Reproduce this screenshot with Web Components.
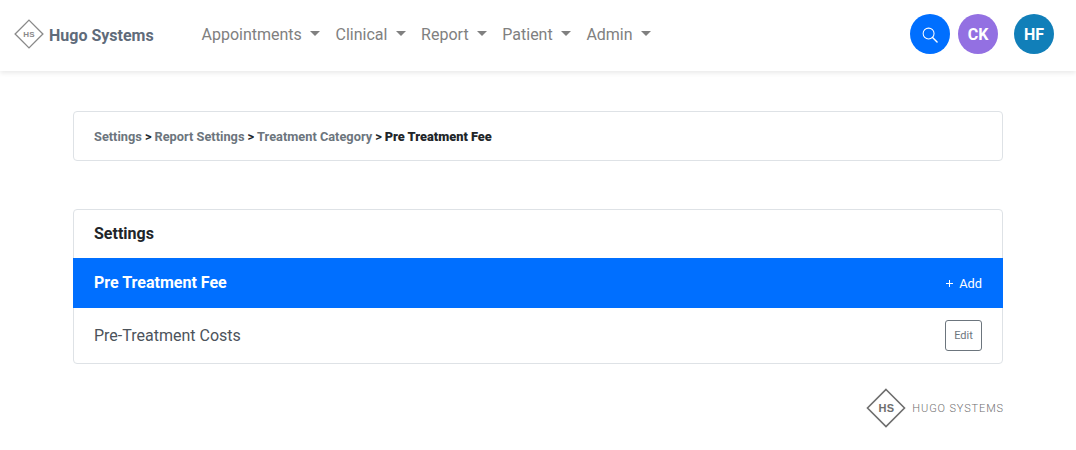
<!DOCTYPE html>
<html lang="en">
<head>
<meta charset="utf-8">
<title>Hugo Systems</title>
<style>
  html, body { margin: 0; background: #fff; }
  /* opacity keeps text on a grayscale antialiased layer, like the reference */
  body { font-family: Roboto, "Liberation Sans", sans-serif; color: #212529; height: 450px; overflow: hidden; opacity: .999; }
</style>
</head>
<body>
<hs-navbar>
  <hs-nav-item>Appointments</hs-nav-item>
  <hs-nav-item>Clinical</hs-nav-item>
  <hs-nav-item>Report</hs-nav-item>
  <hs-nav-item>Patient</hs-nav-item>
  <hs-nav-item>Admin</hs-nav-item>
</hs-navbar>
<hs-page>
  <hs-breadcrumb current="Pre Treatment Fee">
    <span>Settings</span><span>Report Settings</span><span>Treatment Category</span>
  </hs-breadcrumb>
  <hs-settings-card heading="Settings">
    <hs-section-row title="Pre Treatment Fee"></hs-section-row>
    <hs-item-row>Pre-Treatment Costs</hs-item-row>
  </hs-settings-card>
  <hs-footer-logo></hs-footer-logo>
</hs-page>

<script>
  // diamond logo, used in the navbar and in the footer
  class HsDiamond extends HTMLElement {
    constructor() {
      super();
      this.attachShadow({ mode: "open" });
    }
    connectedCallback() {
      const size = this.getAttribute("size") || "30";
      const fontSize = this.getAttribute("text-size") || "8";
      const color = this.getAttribute("color") || "#888";
      this.shadowRoot.innerHTML = `
        <style>
          :host { display: block; flex: none; position: relative; width: ${size}px; height: ${size}px; }
          svg { display: block; width: 100%; height: 100%; }
          span {
            position: absolute; inset: 0;
            display: flex; align-items: center; justify-content: center;
            font: 700 ${fontSize}px "Liberation Sans", sans-serif;
            letter-spacing: .3px;
            color: ${color};
          }
        </style>
        <svg viewBox="0 0 40 40"><path d="M20 1.5 38.5 20 20 38.5 1.5 20Z" fill="none" stroke="${color}" stroke-width="${this.getAttribute("stroke") || "2"}"/></svg>
        <span>HS</span>
      `;
    }
  }

  class HsNavbar extends HTMLElement {
    constructor() {
      super();
      this.attachShadow({ mode: "open" });
      this.shadowRoot.innerHTML = `
        <style>
          :host {
            display: flex; align-items: center;
            height: 71px; box-sizing: border-box;
            padding: 0 22px 3px 14px;
            background: #fff;
            box-shadow: 0 2px 5px rgba(0,0,0,.09);
          }
          .brand { display: flex; align-items: center; gap: 5px; width: 187.5px; flex: none; }
          .brand b { font-size: 16px; font-weight: 700; color: #5f6b7a; position: relative; top: 1px; }
          nav { display: flex; gap: 15.2px; flex: 1; padding-top: 1px; }
          .actions { display: flex; align-items: center; }
          .search {
            width: 40px; height: 40px; border-radius: 50%;
            background: #006fff;
            display: flex; align-items: center; justify-content: center;
            margin-right: 8px;
          }
          .search svg { width: 16px; height: 16px; margin-top: 2px; }
          hs-avatar + hs-avatar { margin-left: 16px; }
        </style>
        <div class="brand">
          <hs-diamond size="30" text-size="8" color="#8a8a8a" stroke="1.8"></hs-diamond>
          <b>Hugo Systems</b>
        </div>
        <nav><slot></slot></nav>
        <div class="actions">
          <div class="search">
            <svg viewBox="0 0 17 17" fill="none" stroke="#fff" stroke-width="1.1" stroke-linecap="round"><circle cx="7" cy="7" r="5.8"/><path d="M11.2 11.2 16 16" stroke-width="1.5"/></svg>
          </div>
          <hs-avatar color="#9370e2">CK</hs-avatar>
          <hs-avatar color="#117fb9">HF</hs-avatar>
        </div>
      `;
    }
  }

  class HsNavItem extends HTMLElement {
    constructor() {
      super();
      this.attachShadow({ mode: "open" });
      this.shadowRoot.innerHTML = `
        <style>
          :host {
            display: inline-flex; align-items: center;
            font-size: 16px; line-height: 24px; color: #808080;
          }
          i {
            display: block; margin-left: 8.5px; margin-top: -3px;
            border-top: 5px solid #808080;
            border-left: 5px solid transparent;
            border-right: 5px solid transparent;
          }
        </style>
        <slot></slot><i></i>
      `;
    }
  }

  class HsAvatar extends HTMLElement {
    constructor() {
      super();
      this.attachShadow({ mode: "open" });
    }
    connectedCallback() {
      this.shadowRoot.innerHTML = `
        <style>
          :host {
            display: flex; align-items: center; justify-content: center;
            width: 40px; height: 40px; border-radius: 50%;
            background: ${this.getAttribute("color")};
            color: #fff; font-size: 16px; font-weight: 700;
          }
        </style>
        <slot></slot>
      `;
    }
  }

  class HsPage extends HTMLElement {
    constructor() {
      super();
      this.attachShadow({ mode: "open" });
      this.shadowRoot.innerHTML = `
        <style>
          :host {
            display: flex; flex-direction: column;
            width: 930px; margin: 40px auto 0;
          }
        </style>
        <slot></slot>
      `;
    }
  }

  class HsBreadcrumb extends HTMLElement {
    constructor() {
      super();
      this.attachShadow({ mode: "open" });
    }
    connectedCallback() {
      // separators go between the slotted links, so assign them one by one
      const links = [...this.children];
      const parts = links.map((_, i) => `<slot name="c${i}"></slot><em>&gt;</em>`).join("");
      links.forEach((el, i) => el.setAttribute("slot", "c" + i));
      this.shadowRoot.innerHTML = `
        <style>
          :host {
            display: flex; align-items: center; gap: 3px;
            height: 50px; box-sizing: border-box;
            padding: 1px 20px 0;
            border: 1px solid #dee2e6; border-radius: 4px;
            font-size: 12.8px; font-weight: 700; color: #6c757d;
            background: #fff;
          }
          em { font-style: normal; color: #212529; }
          b { color: #212529; }
        </style>
        ${parts}<b>${this.getAttribute("current")}</b>
      `;
    }
  }

  class HsSettingsCard extends HTMLElement {
    constructor() {
      super();
      this.attachShadow({ mode: "open" });
    }
    connectedCallback() {
      this.shadowRoot.innerHTML = `
        <style>
          :host {
            display: block; margin-top: 48px;
            border: 1px solid #dee2e6; border-radius: 4px;
            background: #fff;
          }
          header {
            height: 48px; box-sizing: border-box;
            display: flex; align-items: center;
            padding: 0 20px 2px;
            font-size: 16px; font-weight: 700; color: #212529;
          }
        </style>
        <header>${this.getAttribute("heading")}</header>
        <slot></slot>
      `;
    }
  }

  class HsSectionRow extends HTMLElement {
    constructor() {
      super();
      this.attachShadow({ mode: "open" });
    }
    connectedCallback() {
      this.shadowRoot.innerHTML = `
        <style>
          :host {
            display: flex; align-items: center; justify-content: space-between;
            height: 50px; box-sizing: border-box;
            margin: 0 -1px;
            padding: 0 21px 2px;
            background: #006fff; color: #fff;
          }
          b { font-size: 16px; font-weight: 700; }
          span { display: flex; align-items: center; gap: 6px; font-size: 12.8px; padding-top: 2px; }
          svg { width: 7px; height: 7px; margin-top: 1px; }
        </style>
        <b>${this.getAttribute("title")}</b>
        <span><svg viewBox="0 0 7 7" stroke="#fff" stroke-width="1"><path d="M3.5 0v7M0 3.5h7"/></svg>Add</span>
      `;
    }
  }

  class HsItemRow extends HTMLElement {
    constructor() {
      super();
      this.attachShadow({ mode: "open" });
      this.shadowRoot.innerHTML = `
        <style>
          :host {
            display: flex; align-items: center; justify-content: space-between;
            height: 55px; box-sizing: border-box;
            padding: 0 20px;
            font-size: 16px; color: #4c535b;
          }
          button {
            width: 37px; height: 31px; padding: 0;
            background: #fff;
            border: 1px solid #6c757d; border-radius: 3px;
            font: 400 11px Roboto, sans-serif; color: #6c757d;
          }
        </style>
        <span><slot></slot></span>
        <button>Edit</button>
      `;
    }
  }

  class HsFooterLogo extends HTMLElement {
    constructor() {
      super();
      this.attachShadow({ mode: "open" });
      this.shadowRoot.innerHTML = `
        <style>
          :host {
            display: flex; align-items: center; justify-content: flex-end; gap: 6px;
            margin-top: 24px; margin-right: -1px;
          }
          span {
            font: 300 11px Roboto, sans-serif;
            color: #707070; letter-spacing: .88px;
          }
        </style>
        <hs-diamond size="40" text-size="11" color="#6e6e6e" stroke="1.6"></hs-diamond>
        <span>HUGO SYSTEMS</span>
      `;
    }
  }

  customElements.define("hs-diamond", HsDiamond);
  customElements.define("hs-navbar", HsNavbar);
  customElements.define("hs-nav-item", HsNavItem);
  customElements.define("hs-avatar", HsAvatar);
  customElements.define("hs-page", HsPage);
  customElements.define("hs-breadcrumb", HsBreadcrumb);
  customElements.define("hs-settings-card", HsSettingsCard);
  customElements.define("hs-section-row", HsSectionRow);
  customElements.define("hs-item-row", HsItemRow);
  customElements.define("hs-footer-logo", HsFooterLogo);
</script>
</body>
</html>
